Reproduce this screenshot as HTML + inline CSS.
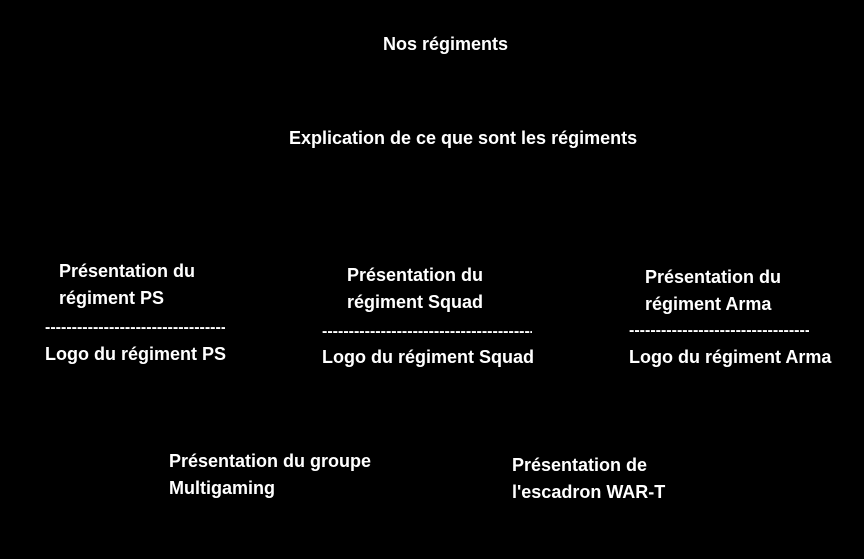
<!DOCTYPE html>
<html><head><meta charset="utf-8"><style>
html,body{margin:0;padding:0;background:#000;}
body{width:864px;height:559px;position:relative;overflow:hidden;font-family:"Liberation Sans",sans-serif;font-weight:bold;font-size:18px;color:#fff;}
div{position:absolute;white-space:nowrap;line-height:20px;}
.d{overflow:hidden;font-size:16px;}
</style></head><body>
<div style="left:383px;top:34px">Nos régiments</div>
<div style="left:289px;top:128px">Explication de ce que sont les régiments</div>

<div style="left:59px;top:261px">Présentation du</div>
<div style="left:59px;top:288px">régiment PS</div>
<div class="d" style="left:45px;top:318px;width:180px">----------------------------------------------</div>
<div style="left:45px;top:344px">Logo du régiment PS</div>

<div style="left:347px;top:265px">Présentation du</div>
<div style="left:347px;top:292px">régiment Squad</div>
<div class="d" style="left:322px;top:322px;width:210px">------------------------------------------------------</div>
<div style="left:322px;top:347px">Logo du régiment Squad</div>

<div style="left:645px;top:267px">Présentation du</div>
<div style="left:645px;top:294px">régiment Arma</div>
<div class="d" style="left:629px;top:321px;width:180px">----------------------------------------------</div>
<div style="left:629px;top:347px">Logo du régiment Arma</div>

<div style="left:169px;top:451px">Présentation du groupe</div>
<div style="left:169px;top:478px">Multigaming</div>

<div style="left:512px;top:455px">Présentation de</div>
<div style="left:512px;top:482px">l'escadron WAR-T</div>
</body></html>
